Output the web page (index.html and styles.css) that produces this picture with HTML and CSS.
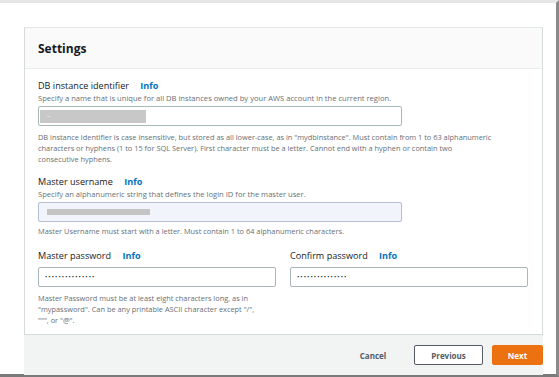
FILE: index.html
```html
<!DOCTYPE html>
<html lang="en">
<head>
    <meta charset="UTF-8">
    <meta name="viewport" content="width=device-width, initial-scale=1.0">
    <title>Settings</title>
    <link rel="stylesheet" href="styles.css">
</head>
<body>
    <div class="frame">
        <div class="page">
            <div class="card">
                <div class="card-header">
                    <h2>Settings</h2>
                </div>
                <div class="card-body">
                    <div class="field">
                        <div class="label">DB instance identifier <a href="#">Info</a></div>
                        <div class="desc">Specify a name that is unique for all DB instances owned by your AWS account in the current region.</div>
                        <div class="input input-id">
                            <span class="redacted">--</span>
                        </div>
                        <div class="hint hint-first">DB instance identifier is case insensitive, but stored as all lower-case, as in "mydbinstance". Must contain from 1 to 63 alphanumeric<br>characters or hyphens (1 to 15 for SQL Server). First character must be a letter. Cannot end with a hyphen or contain two<br>consecutive hyphens.</div>
                    </div>

                    <div class="field">
                        <div class="label">Master username <a href="#">Info</a></div>
                        <div class="desc">Specify an alphanumeric string that defines the login ID for the master user.</div>
                        <div class="input input-user">
                            <span class="redacted-bar"></span>
                        </div>
                        <div class="hint">Master Username must start with a letter. Must contain 1 to 64 alphanumeric characters.</div>
                    </div>

                    <div class="pw-row">
                        <div class="field">
                            <div class="label">Master password <a href="#">Info</a></div>
                            <div class="input input-pw">&bull;&bull;&bull;&bull;&bull;&bull;&bull;&bull;&bull;&bull;&bull;&bull;&bull;&bull;&bull;</div>
                            <div class="hint hint-first">Master Password must be at least eight characters long, as in<br>"mypassword". Can be any printable ASCII character except "/",<br>""", or "@".</div>
                        </div>
                        <div class="field">
                            <div class="label">Confirm password <a href="#">Info</a></div>
                            <div class="input input-pw">&bull;&bull;&bull;&bull;&bull;&bull;&bull;&bull;&bull;&bull;&bull;&bull;&bull;&bull;&bull;</div>
                        </div>
                    </div>
                </div>
            </div>

            <div class="actions">
                <button class="btn-link">Cancel</button>
                <button class="btn-normal">Previous</button>
                <button class="btn-primary">Next</button>
            </div>
        </div>
    </div>
</body>
</html>
```

FILE: styles.css
```css
body {
    margin: 0;
    padding: 0;
    font-family: "Open Sans", "Noto Sans", Arial, sans-serif;
    color: #16191f;
    background-color: #ffffff;
}
.frame {
    width: 556px;
    height: 371px;
    border-top: 3px solid #e6e6e6;
    border-right: 3px solid #8a8a8a;
    border-bottom: 3px solid #7a7a7a;
    background-color: #ffffff;
}
.page {
    padding: 24px 0 0 24px;
    width: 519px;
}
.card {
    border: 1px solid #d5dbdb;
    border-top-color: #e4e7e7;
    background-color: #ffffff;
}
.card-header {
    height: 40px;
    background-color: #fafafa;
    border-bottom: 1px solid #eaeded;
    display: flex;
    align-items: center;
    padding-left: 13px;
}
.card-header h2 {
    margin: 0;
    font-size: 12px;
    font-weight: bold;
    color: #16191f;
}
.card-body {
    padding: 10px 14px 8px 13px;
}
.field {
    margin-bottom: 10px;
}
.pw-row {
    display: grid;
    grid-template-columns: 238px 238px;
    column-gap: 14px;
    margin-top: 12px;
}
.pw-row .field {
    margin-bottom: 0;
}
.label {
    font-size: 9.1px;
    line-height: 14px;
    color: #16191f;
}
.label a {
    color: #0073bb;
    font-weight: bold;
    text-decoration: none;
    margin-left: 9px;
}
.desc {
    font-size: 7.6px;
    line-height: 11px;
    color: #687078;
    white-space: nowrap;
}
.input {
    box-sizing: border-box;
    height: 20px;
    border: 1px solid #aab7b8;
    border-radius: 2px;
    margin-top: 2px;
    display: flex;
    align-items: center;
}
.input-id {
    width: 364px;
}
.input-user {
    width: 364px;
    background-color: #f1f4fb;
    border-color: #b4bfd3;
}
.input-pw {
    width: 238px;
    margin-top: 4px;
    padding-left: 6px;
    font-size: 6px;
    letter-spacing: 1.1px;
    color: #16191f;
}
.redacted {
    display: block;
    width: 99px;
    height: 13px;
    margin-left: 1px;
    padding-left: 7px;
    background-color: #c8c8c8;
    font-size: 6px;
    line-height: 12px;
    color: #ffffff;
}
.redacted-bar {
    display: block;
    width: 103px;
    height: 6px;
    margin-left: 8px;
    background-color: #c4c4c4;
}
.hint {
    font-size: 7.4px;
    line-height: 11px;
    color: #687078;
    margin-top: 4px;
    white-space: nowrap;
}
.hint-first {
    margin-top: 6px;
}
.actions {
    height: 40px;
    background-color: #f2f3f3;
    display: flex;
    align-items: center;
    justify-content: flex-end;
    gap: 9px;
}
.actions button {
    font-family: "Open Sans", "Noto Sans", Arial, sans-serif;
    font-size: 8px;
    font-weight: bold;
    height: 20px;
    border-radius: 2px;
    cursor: pointer;
    padding: 0;
}
.btn-link {
    background: none;
    border: none;
    color: #545b64;
    width: 44px;
    margin-right: 10px;
}
.btn-normal {
    background-color: #ffffff;
    border: 1px solid #545b64;
    color: #545b64;
    width: 69px;
}
.btn-primary {
    background-color: #ec7211;
    border: 1px solid #ec7211;
    color: #ffffff;
    width: 51px;
}
```
